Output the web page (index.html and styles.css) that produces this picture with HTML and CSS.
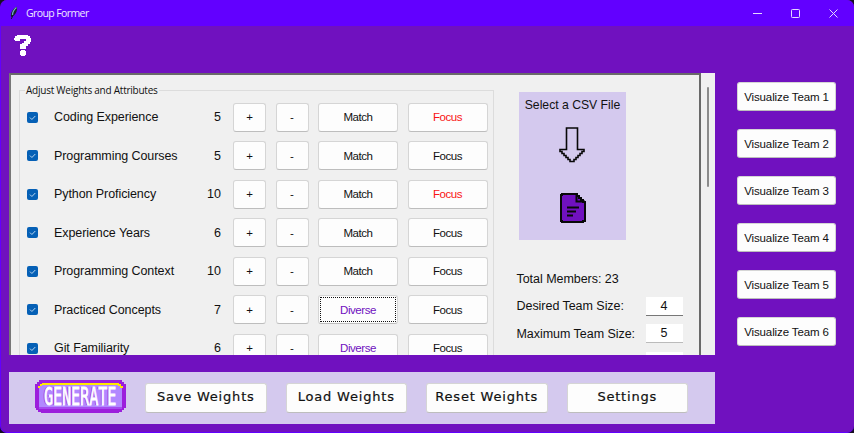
FILE: index.html
```
<!DOCTYPE html>
<html lang="en">
<head>
<meta charset="utf-8">
<title>Group Former</title>
<link rel="stylesheet" href="styles.css">
</head>
<body>
<svg class="defs" width="0" height="0">
  <symbol id="check" viewBox="0 0 11 11"><rect width="11" height="11" rx="2" fill="#0560b6"/><path d="M3 5.6l1.9 1.9L8.3 4" fill="none" stroke="#b9d6f0" stroke-width="1"/></symbol>
</svg>
<div class="window">
  <header class="titlebar">
    <svg class="feather" width="10" height="14" viewBox="0 0 10 14"><path d="M2 11C1 7 4 2 8 .7c.5 4-1.500 8-4.500 9.800z" fill="#17242b"/><path d="M3.500 9C3.500 6 5 3.500 7.500 1.500" fill="none" stroke="#75a9c0" stroke-width="1.300"/><path d="M4 9.500L2.200 13" stroke="#1b1730"/></svg>
    <span class="title">Group Former</span>
    <div class="controls">
      <svg width="9" height="9" viewBox="0 0 9 9"><path d="M0 4.500h9"/></svg>
      <svg width="9" height="9" viewBox="0 0 9 9"><rect x=".5" y=".5" width="8" height="8" rx=".8"/></svg>
      <svg width="9" height="9" viewBox="0 0 9 9"><path d="M.5.5l8 8M8.500.5l-8 8"/></svg>
    </div>
  </header>
  <main class="body">
    <div class="left">
      <svg class="help" width="18" height="21" viewBox="0 0 18 21" fill="#fff"><path d="M3 0h11v1h2v2h1v4h-1v2h-2v2h-2v3H6V9h2V8h2V6h2V4H6v2H1V5H0V3h1V1h2zM6 16h1v-1h4v1h1v4h-1v1H7v-1H6z"/></svg>
      <section class="panel">
        <div class="canvas">
          <fieldset class="weights">
            <legend>Adjust Weights and Attributes</legend>
            <div class="row"><svg class="box"><use href="#check"/></svg><span class="name">Coding Experience</span><span class="num">5</span><button class="sm">+</button><button class="sm">-</button><button class="lg">Match</button><button class="lg red">Focus</button></div>
            <div class="row"><svg class="box"><use href="#check"/></svg><span class="name">Programming Courses</span><span class="num">5</span><button class="sm">+</button><button class="sm">-</button><button class="lg">Match</button><button class="lg">Focus</button></div>
            <div class="row"><svg class="box"><use href="#check"/></svg><span class="name">Python Proficiency</span><span class="num">10</span><button class="sm">+</button><button class="sm">-</button><button class="lg">Match</button><button class="lg red">Focus</button></div>
            <div class="row"><svg class="box"><use href="#check"/></svg><span class="name">Experience Years</span><span class="num">6</span><button class="sm">+</button><button class="sm">-</button><button class="lg">Match</button><button class="lg">Focus</button></div>
            <div class="row"><svg class="box"><use href="#check"/></svg><span class="name">Programming Context</span><span class="num">10</span><button class="sm">+</button><button class="sm">-</button><button class="lg">Match</button><button class="lg">Focus</button></div>
            <div class="row"><svg class="box"><use href="#check"/></svg><span class="name">Practiced Concepts</span><span class="num">7</span><button class="sm">+</button><button class="sm">-</button><button class="lg purple focused">Diverse</button><button class="lg">Focus</button></div>
            <div class="row"><svg class="box"><use href="#check"/></svg><span class="name">Git Familiarity</span><span class="num">6</span><button class="sm">+</button><button class="sm">-</button><button class="lg purple">Diverse</button><button class="lg">Focus</button></div>
          </fieldset>
          <aside class="side">
            <div class="csv">
              <span>Select a CSV File</span>
              <svg class="arrow" width="27" height="36" viewBox="0 0 27 36" fill="none" stroke="#080808" stroke-width="1.600"><path d="M7.500 1h11v21.500H25v2h-2v2h-2v2h-2v2h-2v2h-2v2h-4v-2H9v-2H7v-2H5v-2H3v-2H1v-2h6.500z"/></svg>
              <svg width="26" height="30" viewBox="0 0 26 30"><path d="M2 1h15v2h2v2h2v2h2v2h2v19h-2v1H2v-1H1V2h1z" fill="#7011bf" stroke="#080808" stroke-width="2"/><path d="M16.500 1v7.500H25" fill="none" stroke="#080808" stroke-width="2"/><path d="M7 14.500h12M7 18.500h9M7 22.500h6" stroke="#080808" stroke-width="1.800"/></svg>
            </div>
            <div class="field total"><span>Total Members: 23</span></div>
            <div class="field desired"><span>Desired Team Size:</span><span class="input strong">4</span></div>
            <div class="field maximum"><span>Maximum Team Size:</span><span class="input">5</span></div>
            <div class="field minimum"><span></span><span class="input"></span></div>
          </aside>
        </div>
        <div class="scroll"><div class="thumb"></div></div>
      </section>
      <footer class="actions">
        <div class="generate">
          <svg width="91" height="34" viewBox="0 0 91 34"><path d="M4 0h83v2h2v2h2v24h-2v2h-2v2h-3v1H6v-1H3v-2H1v-2H0V4h2V2h2z" fill="#9c1fdc"/><path d="M5 4h81v3h1v20h-2v2H6v-2H4V7h1z" fill="#b288ff"/><path d="M4 27h83v2H4z" fill="#a64af0"/><path d="M3 8V6h2V4h2V3h77v1h2v2h2v2h-3V6h-2V5H7v1H5v2z" fill="#ffe900"/></svg>
          <span>GENERATE</span>
        </div>
        <button>Save Weights</button>
        <button>Load Weights</button>
        <button>Reset Weights</button>
        <button>Settings</button>
      </footer>
    </div>
    <nav class="teams">
      <button>Visualize Team 1</button>
      <button>Visualize Team 2</button>
      <button>Visualize Team 3</button>
      <button>Visualize Team 4</button>
      <button>Visualize Team 5</button>
      <button>Visualize Team 6</button>
    </nav>
  </main>
</div>
</body>
</html>
```
FILE: styles.css
```
* { box-sizing: border-box; }
body { margin: 0; background: #161020; font-family: "Liberation Sans", Arial, sans-serif; color: #111; overflow: hidden; }
svg { display: block; flex: none; }
.defs { position: absolute; }
button { margin: 0; padding: 0; flex: none; font: 11.5px "Liberation Sans", Arial, sans-serif; color: #111; background: #fdfdfd; border: 1px solid #d5d5d5; border-bottom-color: #bdbdbd; border-radius: 3px; white-space: nowrap; }
.window { width: 854px; height: 433px; display: flex; flex-direction: column; border-radius: 7px; overflow: hidden; background: #7011bf; border-left: 1px solid #6200ff; border-bottom: 1px solid #6200ff; }
.titlebar { height: 26px; flex: none; display: flex; align-items: center; padding: 0 16px 0 8px; background: #6200ff; }
.title { margin-left: 7px; font: 10.5px "Open Sans", "Noto Sans", sans-serif; letter-spacing: -.6px; color: #f0e8ff; }
.controls { margin-left: auto; display: flex; gap: 29px; }
.controls svg { fill: none; stroke: #e5d8ff; stroke-width: 1; }
.body { flex: 1; display: flex; min-height: 0; }
.left { width: 706px; margin-left: 8px; display: flex; flex-direction: column; }
.help { margin: 9px 0 0 5px; }
.panel { margin-top: 17px; height: 282px; display: flex; overflow: hidden; background: #f0f0f0; flex: none; }
.canvas { width: 692px; height: 300px; display: flex; border: solid #696969; border-width: 2px 2px 0; border-left-color: #777; flex: none; }
.weights { width: 475px; height: 330px; flex: none; margin: 9px 0 0 8px; padding: 0 0 0 7px; border: 1px solid #dcdcdc; min-width: 0; }
.weights legend { margin-left: -2px; padding: 0 1px; height: 13px; font: 10px/13px "Open Sans", "Noto Sans", sans-serif; letter-spacing: -.24px; color: #111; }
.row { display: flex; align-items: center; height: 28px; margin-bottom: 10.55px; }
.weights legend + .row { margin-top: 6px; }
.box { width: 11px; height: 11px; }
.name { width: 137px; margin-left: 16px; font-size: 12.5px; letter-spacing: -.08px; white-space: nowrap; }
.num { width: 30px; margin-right: 12px; text-align: right; font-size: 12.5px; }
.num { flex: none; }
.name { flex: none; }
.sm { width: 33px; height: 29px; margin-right: 9.5px; }
.lg { width: 80px; height: 29px; margin-right: 9.5px; letter-spacing: -.45px; }
.red { color: #f91414; }
.purple { color: #7011bf; }
.focused { outline: 1px dotted #111; outline-offset: -3px; }
.side { margin-left: 23px; width: 170px; display: flex; flex-direction: column; font-size: 12.5px; }
.csv { width: 107px; height: 148px; flex: none; margin: 17px 0 0 2px; padding-top: 6px; display: flex; flex-direction: column; align-items: center; background: #d4c9ee; font-size: 12.2px; white-space: nowrap; }
.arrow { margin: 15px 0 30px; }
.field { display: flex; justify-content: space-between; align-items: center; height: 20px; flex: none; width: 166px; margin-left: -.5px; white-space: nowrap; letter-spacing: -.04px; }
.total { margin-top: 29px; }
.desired { margin-top: 7px; }
.maximum, .minimum { margin-top: 7.5px; }
.input { width: 37px; height: 19px; background: #fff; border-bottom: 1px solid #bbb; text-align: center; line-height: 19px; }
.strong { border-bottom-color: #777; }
.scroll { width: 14px; padding: 14px 0 0 6px; }
.thumb { width: 2px; height: 100px; background: #8b8b8b; border-radius: 1px; }
.actions { margin-top: 17px; height: 52px; flex: none; display: flex; align-items: flex-start; padding: 11px 0 0 26px; gap: 19px; background: #d4c9ee; }
.actions button { width: 121.500px; height: 30px; font: 13px "DejaVu Sans", sans-serif; letter-spacing: .8px; padding-bottom: 4px; -webkit-text-stroke: .2px #111; }
.generate { position: relative; width: 91px; height: 34px; margin-top: -3px; }
.generate span { position: absolute; left: 9px; top: 8px; font: 15px/18px "DejaVu Sans Mono", monospace; color: #fff; transform: scaleY(1.65); -webkit-text-stroke: .5px #fff; text-shadow: -1px 0 #9c1fdc; }
.teams { margin: 56px 0 0 22px; display: flex; flex-direction: column; gap: 18px; }
.teams button { width: 99px; height: 29px; letter-spacing: -.12px; }
```
